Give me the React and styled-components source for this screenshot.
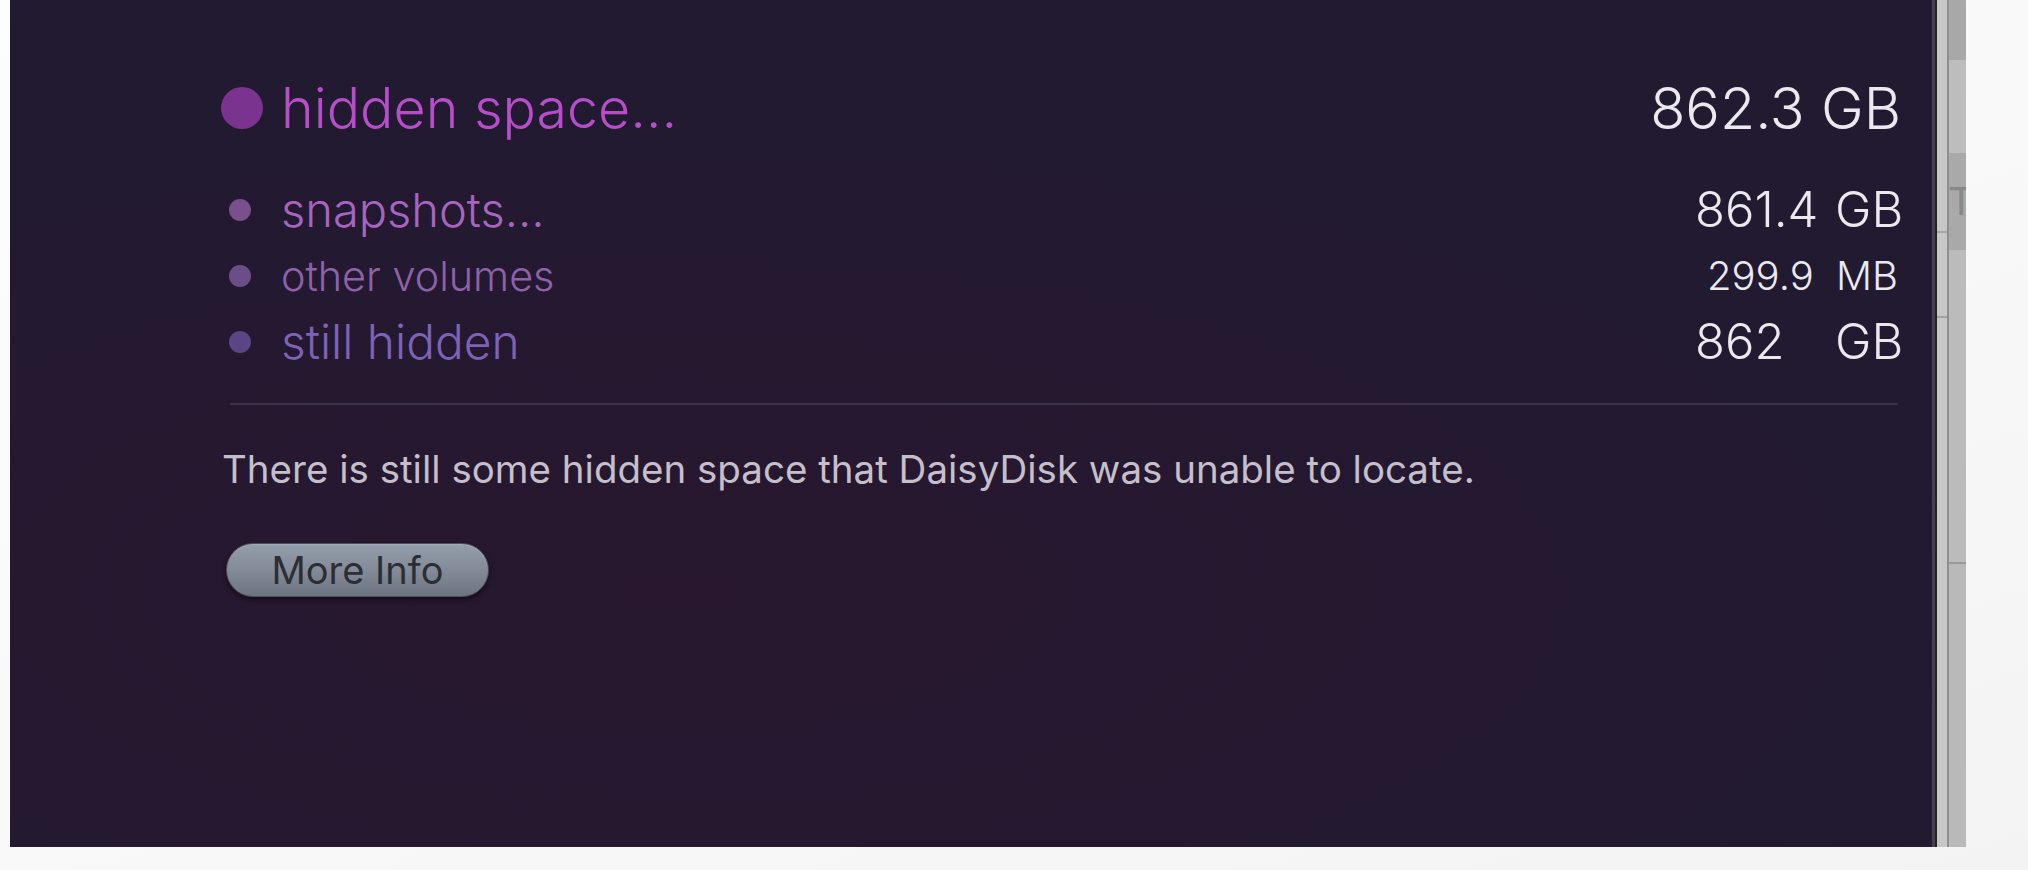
import React from "react"
import styled, { createGlobalStyle } from "styled-components"

const rows = [
  { label: "snapshots…", num: "861.4", unit: "GB", size: 47, color: "#a765bf", dot: "#7a4f8d", valueSize: 49 },
  { label: "other volumes", num: "299.9", unit: "MB", size: 41.3, color: "#8e62a8", dot: "#6b4d88", valueSize: 40, shift: 12 },
  { label: "still hidden", num: "862", unit: "GB", size: 47.8, color: "#7c63b6", dot: "#5a4687", valueSize: 49 },
]

function App() {
  return (
    <Screen>
      <GlobalStyle />
      <Panel>
        <HeadRow>
          <Label>
            <BulletSlot>
              <Dot $size={42} $color="#7b3390" $offset={0} />
            </BulletSlot>
            <HeadText>hidden space…</HeadText>
          </Label>
          <HeadValue>862.3 GB</HeadValue>
        </HeadRow>
        {rows.map((r) => (
          <Row key={r.label}>
            <Label>
              <BulletSlot>
                <Dot $size={22} $color={r.dot} $offset={8} />
              </BulletSlot>
              <RowText $size={r.size} $color={r.color}>
                {r.label}
              </RowText>
            </Label>
            <Value $size={r.valueSize}>
              <Num $shift={r.shift || 0}>{r.num}</Num>
              <Unit>{r.unit}</Unit>
            </Value>
          </Row>
        ))}
        <Divider />
        <Note>There is still some hidden space that DaisyDisk was unable to locate.</Note>
        <InfoButton>More Info</InfoButton>
      </Panel>
      <Edge>
        <EdgeLight>
          <LightCell $h={233} />
          <LightCell $h={85} />
          <LightCell $h={529} $last />
        </EdgeLight>
        <EdgePane>
          <PaneCell $h={60} $bg="#a8a8a8" />
          <PaneCell $h={93} $bg="#bdbdbd" />
          <PaneCell $h={97} $bg="#a9a9a9">
            <PaneText>To</PaneText>
          </PaneCell>
          <PaneCell $h={314} $bg="#bbbbbb" $line />
          <PaneCell $h={283} $bg="#b9b9b9" />
        </EdgePane>
      </Edge>
    </Screen>
  )
}

const GlobalStyle = createGlobalStyle`
  body {
    margin: 0;
    background: #f6f6f6;
    font-family: Inter, "Noto Sans", sans-serif;
  }
`
const Screen = styled.div`
  width: 2028px;
  height: 870px;
  display: flex;
  align-items: flex-start;
  padding-left: 10px;
  box-sizing: border-box;
  background: linear-gradient(160deg, #fdfdfd 0%, #f8f8f8 60%, #f3f3f3 100%);
`
const Panel = styled.div`
  width: 1925px;
  height: 847px;
  box-sizing: border-box;
  padding: 66px 34px 0 211px;
  display: flex;
  flex-direction: column;
  background: radial-gradient(ellipse 70% 60% at 35% 70%, #28172f 0%, rgba(40, 23, 47, 0) 100%),
    #211a31;
  border-right: 3px solid #463f55;
`
const HeadRow = styled.div`
  height: 84px;
  display: flex;
  align-items: center;
  justify-content: space-between;
  margin-bottom: 27px;
`
const Row = styled.div`
  height: 66px;
  display: flex;
  align-items: center;
  justify-content: space-between;
`
const Label = styled.div`
  display: flex;
  align-items: center;
`
const BulletSlot = styled.div`
  width: 60px;
  display: flex;
  align-items: center;
`
const Dot = styled.span`
  width: ${(p) => p.$size}px;
  height: ${(p) => p.$size}px;
  margin-left: ${(p) => p.$offset}px;
  border-radius: 50%;
  background: ${(p) => p.$color};
`
const HeadText = styled.span`
  font-size: 55.5px;
  font-weight: 300;
  line-height: 84px;
  color: #b84dc9;
`
const RowText = styled.span`
  font-size: ${(p) => p.$size}px;
  line-height: 66px;
  font-weight: 300;
  color: ${(p) => p.$color};
`
const HeadValue = styled.span`
  font-size: 57.5px;
  font-weight: 300;
  line-height: 84px;
  margin-right: -3px;
  color: #ebe8ee;
`
const Value = styled.div`
  display: flex;
  align-items: baseline;
  font-size: ${(p) => p.$size}px;
  font-weight: 300;
  line-height: 66px;
  color: #ebe8ee;
`
const Num = styled.span`
  width: 140px;
  box-sizing: border-box;
  padding-left: ${(p) => p.$shift}px;
`
const Unit = styled.span`
  width: 63px;
  text-align: right;
  white-space: nowrap;
`
const Divider = styled.div`
  height: 2px;
  margin: 28px 0 0 9px;
  background: #39324a;
`
const Note = styled.p`
  margin: 42px 0 0 1px;
  font-size: 38.5px;
  line-height: 44px;
  color: #c4bfca;
`
const InfoButton = styled.button`
  align-self: flex-start;
  width: 263px;
  height: 54px;
  margin: 52px 0 0 5px;
  border: 1px solid #4b4f5a;
  border-radius: 27px;
  background: linear-gradient(180deg, #949dab 0%, #838b98 50%, #6d7481 100%);
  box-shadow: 0 3px 5px rgba(0, 0, 0, 0.45), inset 0 1px 0 rgba(255, 255, 255, 0.15);
  font-family: Inter, "Noto Sans", sans-serif;
  font-size: 38px;
  color: #2b2e34;
  padding: 0;
`
const Edge = styled.div`
  height: 847px;
  display: flex;
  border-left: 2px solid #222;
`
const EdgeLight = styled.div`
  width: 10px;
  display: flex;
  flex-direction: column;
  background: #c7c7c7;
  border-right: 2px solid #8f8f8f;
`
const LightCell = styled.div`
  height: ${(p) => p.$h}px;
  border-bottom: ${(p) => (p.$last ? "none" : "2px solid #a3a3a3")};
  box-sizing: border-box;
`
const EdgePane = styled.div`
  width: 17px;
  display: flex;
  flex-direction: column;
  overflow: hidden;
`
const PaneCell = styled.div`
  height: ${(p) => p.$h}px;
  background: ${(p) => p.$bg};
  border-bottom: ${(p) => (p.$line ? "2px solid #999" : "none")};
  box-sizing: border-box;
  overflow: hidden;
  display: flex;
  align-items: center;
`
const PaneText = styled.span`
  font-family: "Liberation Sans", sans-serif;
  font-size: 40px;
  color: #888;
  white-space: nowrap;
`

export default App
